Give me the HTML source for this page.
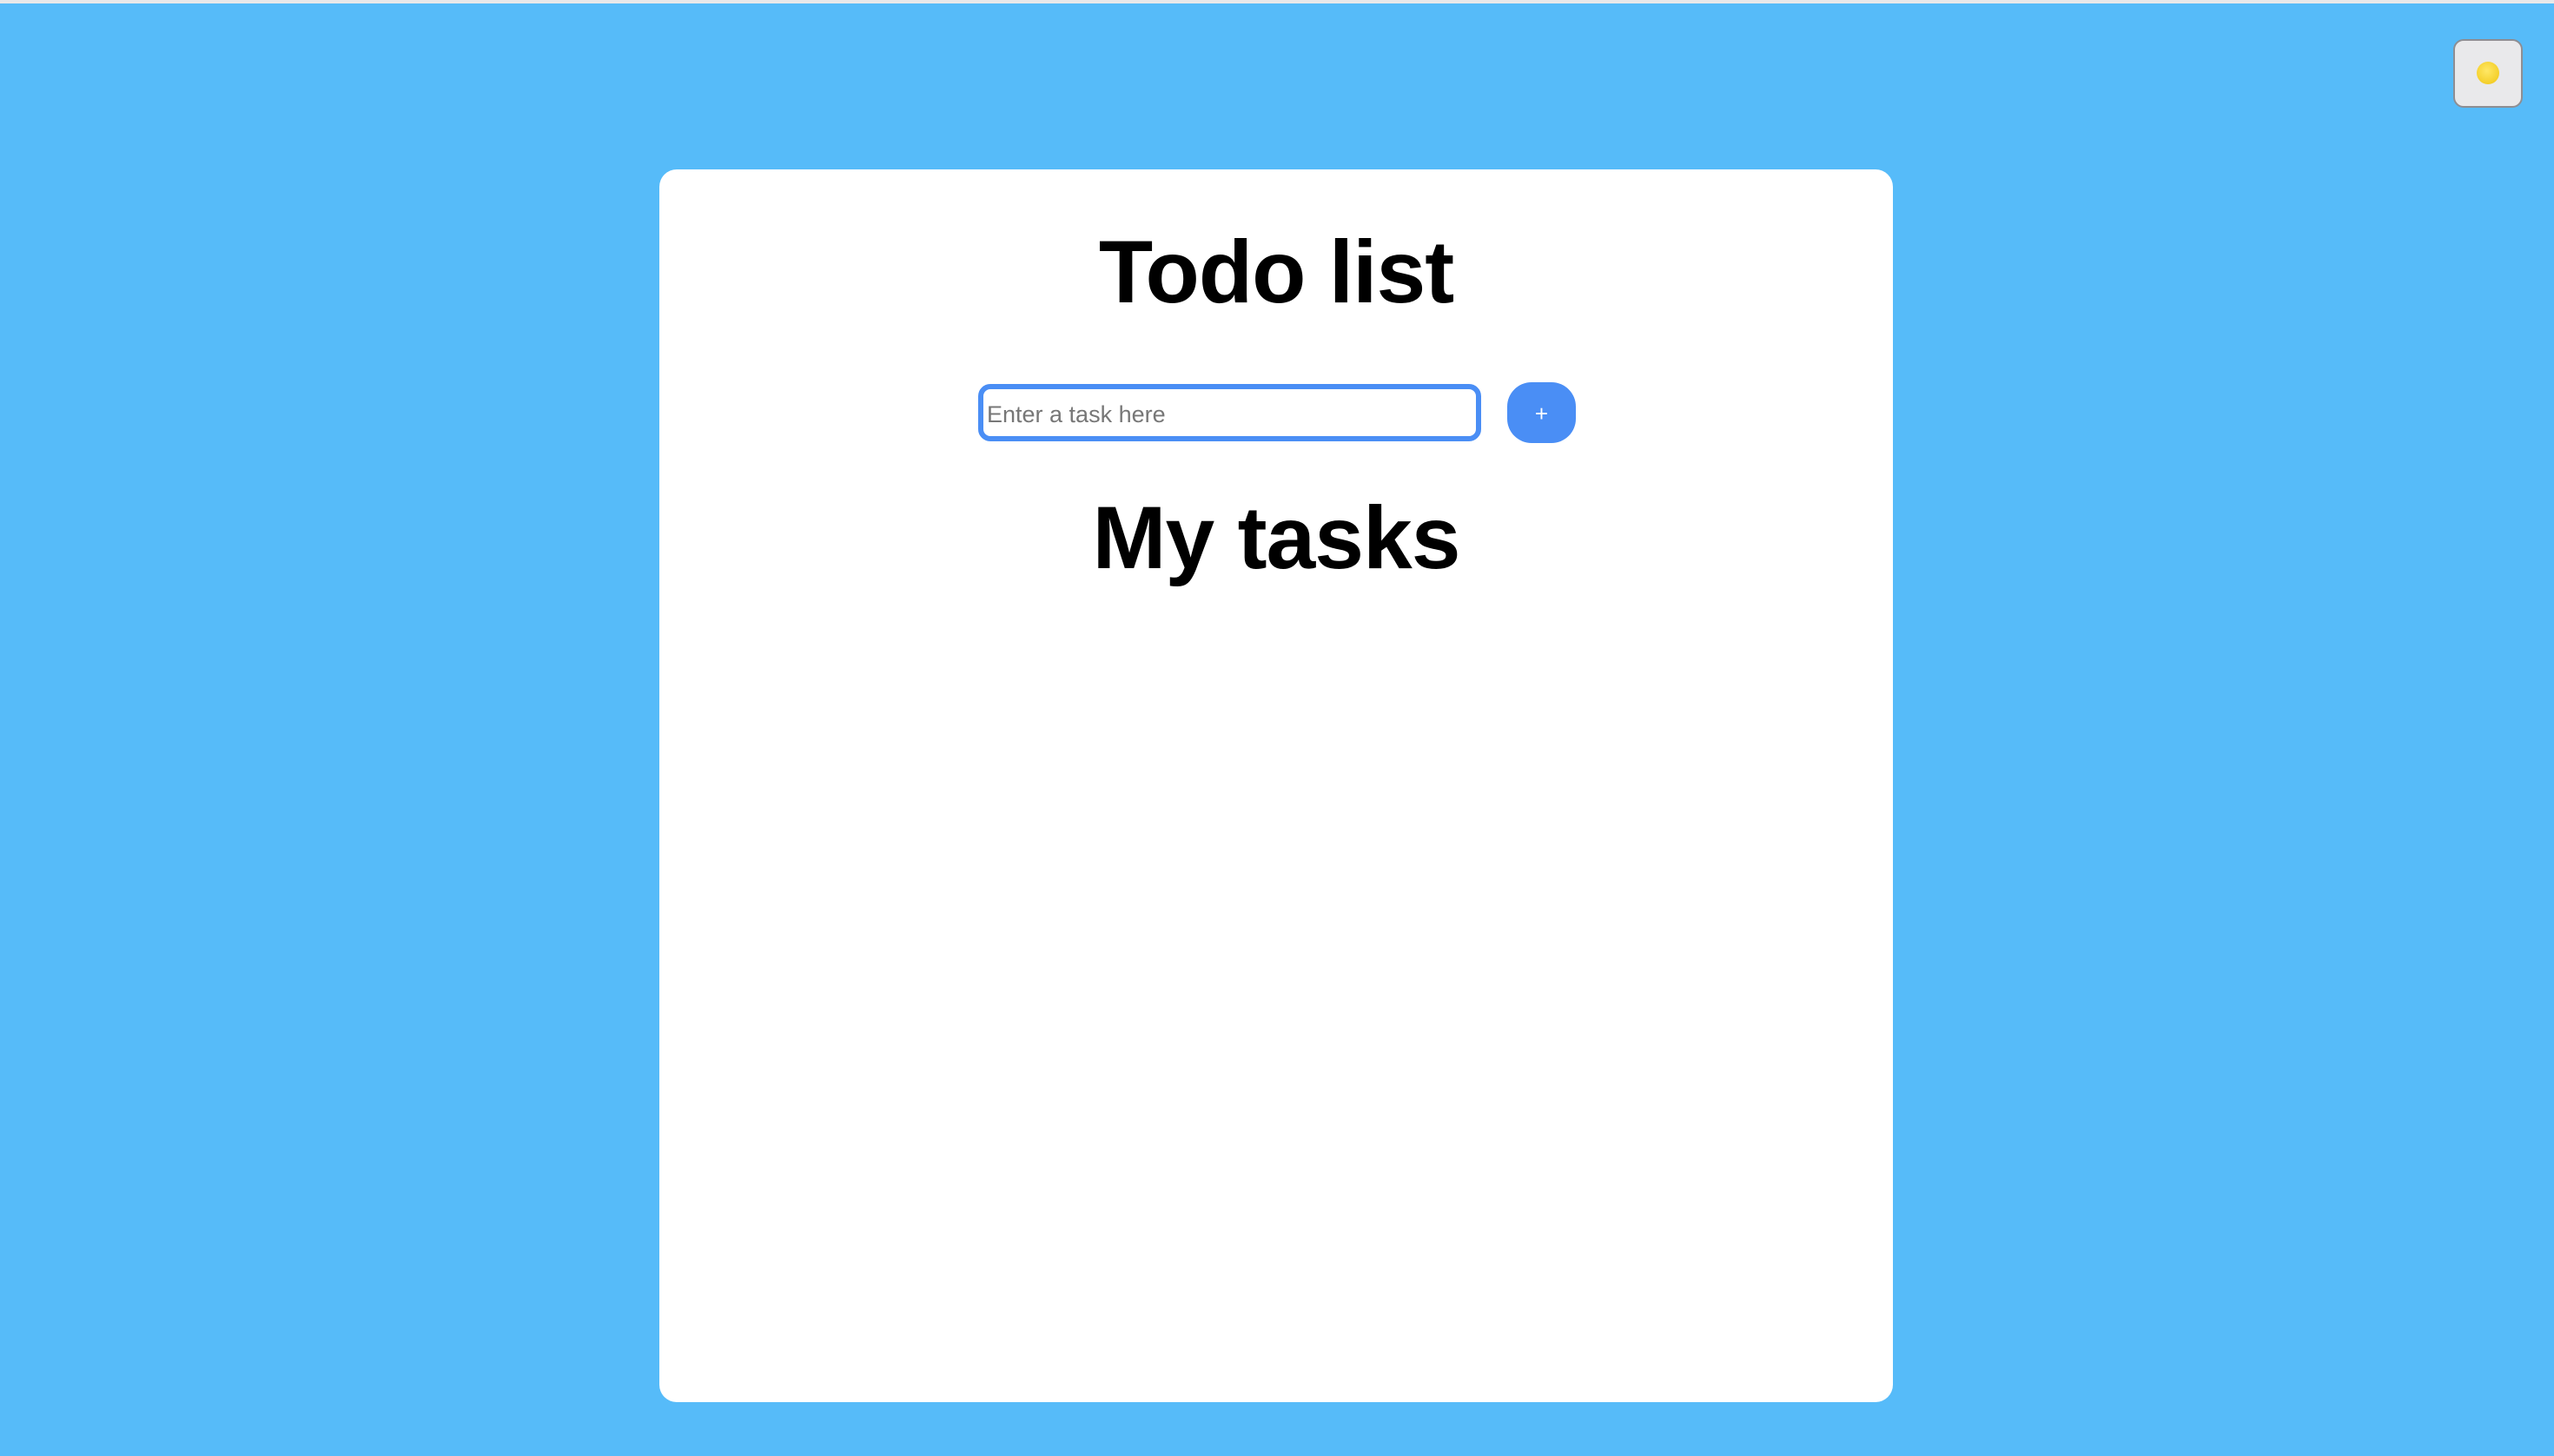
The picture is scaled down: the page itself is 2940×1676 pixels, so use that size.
<!DOCTYPE html>
<html><head><meta charset="utf-8"><style>
html,body{margin:0;padding:0}
body{width:2940px;height:1676px;background:#56bbf9;position:relative;overflow:hidden;font-family:"Liberation Sans",Arial,sans-serif}
.strip{position:absolute;left:0;top:0;width:2940px;height:4px;background:#e8e8ea}
.toggle{position:absolute;left:2824px;top:45px;width:76px;height:75px;background:#e9e9eb;border:2px solid #8e8e93;border-radius:12px;box-sizing:content-box}
.moon{position:absolute;left:25px;top:24px;width:26px;height:26px;border-radius:50%;background:radial-gradient(circle at 45% 40%,#ffe866,#f4cf2a 70%,#e6b820)}
.card{position:absolute;left:759px;top:195px;width:1420px;height:1419px;background:#fff;border-radius:20px}
h1{position:absolute;left:0;width:1420px;margin:0;text-align:center;font-weight:bold;font-size:102px;line-height:1;letter-spacing:-1px;color:#000}
.inp{position:absolute;left:367px;top:247px;width:579px;height:66px;box-sizing:border-box;border:6px solid #4a8ef5;border-radius:14px}
.ph{position:absolute;left:4px;top:13px;font-size:27px;color:#777;line-height:32px}
.btn{position:absolute;left:976px;top:245px;width:79px;height:70px;background:#4a8ef5;border-radius:28px;color:#fff;font-size:26px;text-align:center;line-height:72px}
</style></head><body>
<div class="strip"></div>
<div class="toggle"><div class="moon"></div></div>
<div class="card">
<h1 style="top:67px">Todo list</h1>
<div class="inp"><span class="ph">Enter a task here</span></div>
<div class="btn">+</div>
<h1 style="top:373px">My tasks</h1>
</div>
</body></html>
